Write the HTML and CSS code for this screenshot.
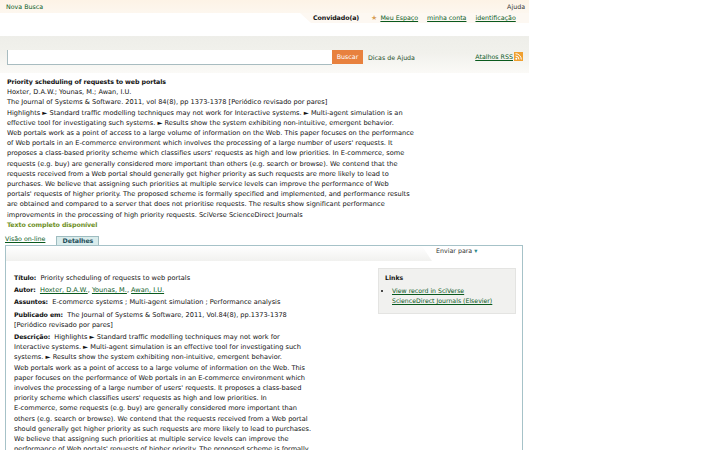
FILE: index.html
```html
<!DOCTYPE html>
<html lang="pt">
<head>
<meta charset="utf-8">
<title>Priority scheduling of requests to web portals</title>
<link rel="stylesheet" href="styles.css">
</head>
<body>
<div class="page">
  <div class="topbar">
    <a class="newsearch">Nova Busca</a>
    <span class="help">Ajuda</span>
  </div>
  <div class="userrow">
    <div class="usertab">
      <span class="guest">Convidado(a)</span>
      <span class="star">★</span>
      <a class="link">Meu Espaço</a>
      <a class="link">minha conta</a>
      <a class="link">identificação</a>
    </div>
  </div>
  <div class="searchband">
    <div class="searchrow">
      <input class="searchinput" type="text">
      <span class="searchbtn">Buscar</span>
      <span class="searchhelp">Dicas de Ajuda</span>
      <span class="spacer"></span>
      <a class="link">Atalhos RSS</a>
      <svg class="rss" viewBox="0 0 9 9"><rect width="9" height="9" fill="#f0a030"/><circle cx="2.3" cy="6.8" r="1" fill="#fff"/><path d="M1.5 4a3.5 3.5 0 0 1 3.5 3.500M1.500 1.700a5.800 5.800 0 0 1 5.800 5.800" fill="none" stroke="#fff"/></svg>
    </div>
  </div>
  <div class="record">
    <div class="rectitle">Priority scheduling of requests to web portals</div>
    <div>Hoxter, D.A.W.; Younas, M.; Awan, I.U.</div>
    <div>The Journal of Systems &amp; Software. 2011, vol 84(8), pp 1373-1378 [Periódico revisado por pares]</div>
    <div>Highlights ► Standard traffic modelling techniques may not work for Interactive systems. ► Multi-agent simulation is an<br>
    effective tool for investigating such systems. ► Results show the system exhibiting non-intuitive, emergent behavior.<br>
    Web portals work as a point of access to a large volume of information on the Web. This paper focuses on the performance<br>
    of Web portals in an E-commerce environment which involves the processing of a large number of users' requests. It<br>
    proposes a class-based priority scheme which classifies users' requests as high and low priorities. In E-commerce, some<br>
    requests (e.g. buy) are generally considered more important than others (e.g. search or browse). We contend that the<br>
    requests received from a Web portal should generally get higher priority as such requests are more likely to lead to<br>
    purchases. We believe that assigning such priorities at multiple service levels can improve the performance of Web<br>
    portals' requests of higher priority. The proposed scheme is formally specified and implemented, and performance results<br>
    are obtained and compared to a server that does not prioritise requests. The results show significant performance<br>
    improvements in the processing of high priority requests. SciVerse ScienceDirect Journals</div>
    <div class="fulltext">Texto completo disponível</div>
  </div>
  <div class="tabs">
    <a class="link tabplain">Visão on-line</a>
    <span class="tabactive">Detalhes</span>
  </div>
  <div class="panel">
    <div class="paneltools"><span class="sendto">Enviar para <span class="arrow">▾</span></span></div>
    <div class="panelbody">
      <div class="details">
        <div class="field"><b>Título:</b>&nbsp; Priority scheduling of requests to web portals</div>
        <div class="field"><b>Autor:</b>&nbsp; <a class="link">Hoxter, D.A.W.</a>, <a class="link">Younas, M.</a>, <a class="link">Awan, I.U.</a></div>
        <div class="field"><b>Assuntos:</b>&nbsp; E-commerce systems ; Multi-agent simulation ; Performance analysis</div>
        <div class="field"><b>Publicado em:</b>&nbsp; The Journal of Systems &amp; Software, 2011, Vol.84(8), pp.1373-1378<br>[Periódico revisado por pares]</div>
        <div class="field desc"><b>Descrição:</b>&nbsp; Highlights ► Standard traffic modelling techniques may not work for<br>
        Interactive systems. ► Multi-agent simulation is an effective tool for investigating such<br>
        systems. ► Results show the system exhibiting non-intuitive, emergent behavior.<br>
        Web portals work as a point of access to a large volume of information on the Web. This<br>
        paper focuses on the performance of Web portals in an E-commerce environment which<br>
        involves the processing of a large number of users' requests. It proposes a class-based<br>
        priority scheme which classifies users' requests as high and low priorities. In<br>
        E-commerce, some requests (e.g. buy) are generally considered more important than<br>
        others (e.g. search or browse). We contend that the requests received from a Web portal<br>
        should generally get higher priority as such requests are more likely to lead to purchases.<br>
        We believe that assigning such priorities at multiple service levels can improve the<br>
        performance of Web portals' requests of higher priority. The proposed scheme is formally</div>
      </div>
      <aside class="linksbox">
        <div class="linkstitle">Links</div>
        <ul class="linkslist">
          <li><a class="link">View record in SciVerse<br>ScienceDirect Journals (Elsevier)</a></li>
        </ul>
      </aside>
    </div>
  </div>
</div>
</body>
</html>
```
FILE: styles.css
```css
* { box-sizing: border-box; }
html, body { margin: 0; padding: 0; background: #fff; overflow: hidden; }
body { width: 720px; height: 450px; font-family: "DejaVu Sans", Verdana, sans-serif; font-size: 6.6px; line-height: 10.2px; color: #111; }
b { font-size: 6.3px; letter-spacing: -0.1px; }
.page { width: 529px; }
.link { color: #0a5a1e; text-decoration: underline; }
.topbar { height: 13px; padding: 2px 4px 0 6px; display: flex; justify-content: space-between; font-size: 6.3px; background: linear-gradient(to bottom, #fdf3e6, #fdf7ef); }
.newsearch { color: #0a5a1e; }
.help { color: #333; }
.userrow { height: 23px; background: #fff; }
.usertab { height: 10px; margin-left: 300px; display: flex; align-items: center; gap: 9px; padding: 1px 0 0 13px; font-size: 6.3px; background: #fdf8f2; clip-path: polygon(0 0, 100% 0, 100% 100%, 11px 100%); }
.guest { font-weight: bold; color: #111; margin-right: 3px; font-size: 6.3px; letter-spacing: -0.1px; }
.star { color: #d9a05a; font-size: 7px; margin-right: -6px; }
.searchband { height: 37px; background: linear-gradient(to bottom, #eeeee9, #f1f1ec 45%, #fbfaf7); padding: 14px 6px 0 7px; font-size: 6.3px; }
.searchrow { display: flex; align-items: flex-start; height: 14px; }
.searchinput { width: 325px; height: 15px; border: 1px solid #a8bcc0; border-top: 0; border-right: 0; background: #fff; margin: 0; padding: 0; }
.searchbtn { width: 31px; height: 14px; background: #e8813e; color: #fff; text-align: center; line-height: 13px; }
.searchhelp { margin-left: 5px; line-height: 15px; color: #1f4f2a; }
.searchrow .link { line-height: 13px; }
.spacer { flex: 1; }
.rss { width: 9px; height: 9px; margin: 2px 0 0 1px; }
.record { padding: 4px 0 0 7px; }
.rectitle { font-weight: bold; font-size: 6.3px; letter-spacing: -0.1px; }
.fulltext { color: #6d8f1d; font-weight: bold; font-size: 6.3px; letter-spacing: -0.1px; }
.tabs { display: flex; align-items: flex-end; height: 15px; padding-left: 5px; font-size: 6.3px; }
.tabplain { margin-right: 11px; line-height: 10px; padding-bottom: 1px; }
.tabactive { height: 9px; width: 43px; background: #d9ecec; border: 1px solid #9fbcc0; border-bottom: 0; text-align: center; line-height: 8px; font-weight: bold; font-size: 6.3px; letter-spacing: -0.1px; color: #1f4f5a; }
.panel { width: 518px; margin-left: 5px; border: 1px solid #a6c2c8; height: 206px; overflow: hidden; }
.paneltools { height: 15px; display: flex; justify-content: flex-end; font-size: 6.3px; background: linear-gradient(to bottom, #fff, #f1f1ef); }
.sendto { width: 100px; height: 15px; padding-left: 14px; color: #333; background: #fff; clip-path: polygon(0 0, 100% 0, 100% 100%, 10px 100%); }
.arrow { color: #2a8a8a; }
.panelbody { display: flex; justify-content: space-between; padding: 7px 6px 0 8px; }
.details { width: 345px; margin-top: 5px; }
.field { margin-bottom: 2px; }
.desc { margin-bottom: 0; }
.linksbox { width: 138px; height: 46px; background: #f1f1ef; border: 1px solid #e4e4e2; padding: 4px 6px; font-size: 6.2px; }
.linkstitle { font-weight: bold; margin-bottom: 3px; }
.linkslist { margin: 0; padding: 0 0 0 7px; list-style: disc; }
```
